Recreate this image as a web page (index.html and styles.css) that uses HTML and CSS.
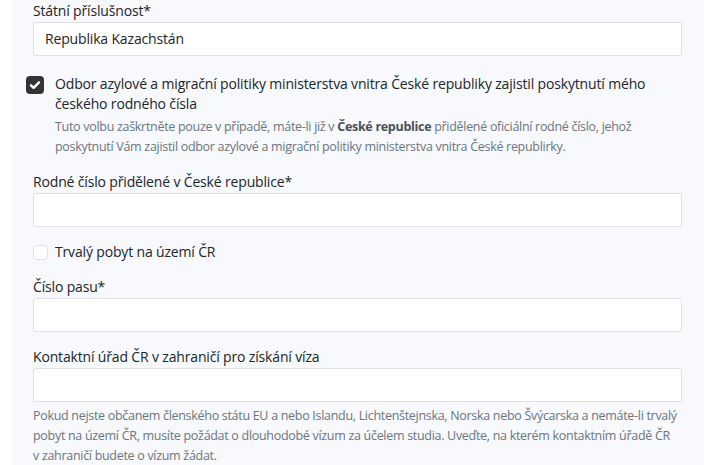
FILE: index.html
```html
<!DOCTYPE html>
<html lang="cs">
<head>
<meta charset="utf-8">
<title>Formulář</title>
<link rel="stylesheet" href="styles.css">
</head>
<body>
<div class="page">
  <div class="panel">
    <div class="field">
      <label class="label">Státní příslušnost*</label>
      <div class="input">Republika Kazachstán</div>
    </div>

    <div class="check-row checked-row">
      <span class="box checked">
        <svg viewBox="0 0 18 18" width="18" height="18"><path d="M5 9.3l2.6 2.5L13 6.4" fill="none" stroke="#fff" stroke-width="2.4" stroke-linecap="round" stroke-linejoin="round"/></svg>
      </span>
      <div class="check-text">
        <div class="check-label">Odbor azylové a migrační politiky ministerstva vnitra České republiky zajistil poskytnutí mého českého rodného čísla</div>
        <div class="help">Tuto volbu zaškrtněte pouze v případě, máte-li již v <b>České republice</b> přidělené oficiální rodné číslo, jehož poskytnutí Vám zajistil odbor azylové a migrační politiky ministerstva vnitra České republirky.</div>
      </div>
    </div>

    <div class="field f2">
      <label class="label">Rodné číslo přidělené v České republice*</label>
      <div class="input"></div>
    </div>

    <div class="check-row plain">
      <span class="box empty"></span>
      <div class="check-label">Trvalý pobyt na území ČR</div>
    </div>

    <div class="field f3">
      <label class="label">Číslo pasu*</label>
      <div class="input"></div>
    </div>

    <div class="field f4">
      <label class="label">Kontaktní úřad ČR v zahraničí pro získání víza</label>
      <div class="input"></div>
      <div class="help help-wide">Pokud nejste občanem členského státu EU a nebo Islandu, Lichtenštejnska, Norska nebo Švýcarska a nemáte-li trvalý pobyt na území ČR, musíte požádat o dlouhodobé vízum za účelem studia. Uveďte, na kterém kontaktním úřadě ČR<br>v zahraničí budete o vízum žádat.</div>
    </div>
  </div>
</div>
</body>
</html>
```

FILE: styles.css
```css
html, body {
  margin: 0;
  padding: 0;
  background: #ffffff;
}
body {
  font-family: "Open Sans", "Noto Sans", "DejaVu Sans", sans-serif;
  color: #212529;
  font-size: 14px;
  letter-spacing: -0.16px;
}
.page {
  padding-left: 12px;
  width: 692px;
}
.panel {
  background: #f7f9fc;
  padding: 0 22px 10px 21px;
  height: 465px;
  box-sizing: border-box;
}
.field {
  display: flex;
  flex-direction: column;
}
.label {
  display: block;
  line-height: 22px;
  margin-bottom: 0;
}
.input {
  height: 34px;
  box-sizing: border-box;
  background: #fff;
  border: 1px solid #dee2e6;
  border-radius: 2px;
  padding: 0 11px;
  line-height: 32px;
}
.check-row {
  display: flex;
  align-items: flex-start;
}
.checked-row {
  margin-top: 18px;
  margin-left: -7px;
}
.box {
  flex: none;
  box-sizing: border-box;
}
.box.checked {
  width: 18px;
  height: 18px;
  border-radius: 4px;
  background: #343434;
  margin-top: 2px;
  margin-right: 11px;
}
.box.checked svg {
  display: block;
}
.box.empty {
  width: 15px;
  height: 15px;
  border: 1px solid #dde2e8;
  border-radius: 4px;
  background: #fff;
  margin-top: 3px;
  margin-right: 7px;
}
.check-label {
  line-height: 20px;
}
.help {
  color: #6c757d;
  font-size: 12.5px;
  letter-spacing: -0.3px;
  line-height: 20px;
  margin-top: 3px;
}
.help b {
  color: #495057;
  font-weight: 700;
}
.f2 {
  margin-top: 14px;
}
.plain {
  margin-top: 15px;
}
.f3 {
  margin-top: 14px;
}
.f4 {
  margin-top: 14px;
}
.help-wide {
  margin-top: 4px;
  line-height: 20px;
}
```
